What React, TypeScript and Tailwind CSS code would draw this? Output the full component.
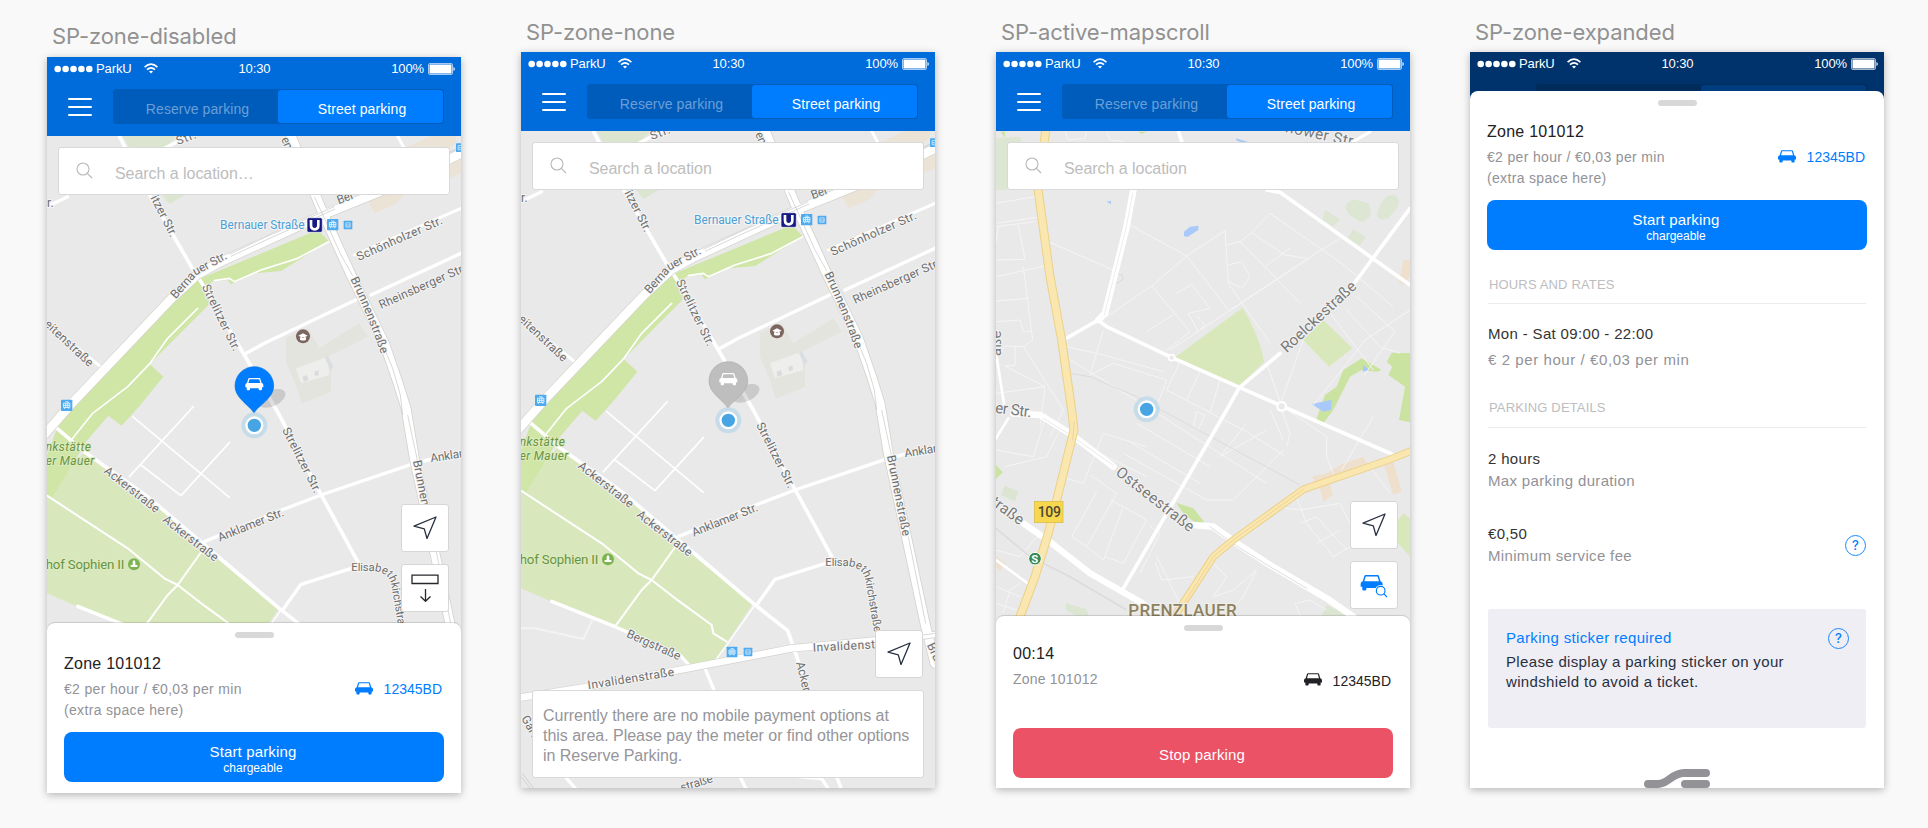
import React from "react";

const ROAD = "#ffffff";

type LabelProps = {
  x: number;
  y: number;
  r?: number;
  len: number;
  size?: number;
  fill?: string;
  halo?: string;
  weight?: number;
  italic?: boolean;
  children: string;
};

/* Map caption anchored at its baseline start and rotated around it. */
function Label({ x, y, r = 0, len, size = 36, fill = "#6e6e6e", halo = "#f4f4f4", weight = 400, italic, children }: LabelProps) {
  return (
    <text
      transform={`translate(${x} ${y}) rotate(${r})`}
      textLength={len}
      fontFamily="Roboto, sans-serif"
      fontSize={size}
      fontWeight={weight}
      fontStyle={italic ? "italic" : "normal"}
      fill={fill}
      stroke={halo}
      strokeWidth={6}
      strokeLinejoin="round"
      paintOrder="stroke"
    >
      {children}
    </text>
  );
}

function CurvedLabel({ id, d, len, size = 36, children }: { id: string; d: string; len: number; size?: number; children: string }) {
  return (
    <>
      <path id={id} d={d} fill="none" />
      <text fontFamily="Roboto, sans-serif" fontSize={size} fill="#6e6e6e" stroke="#f4f4f4" strokeWidth={6} strokeLinejoin="round" paintOrder="stroke">
        <textPath href={`#${id}`} textLength={len}>
          {children}
        </textPath>
      </text>
    </>
  );
}

function Transit({ x, y, s = 32, bus }: { x: number; y: number; s?: number; bus?: boolean }) {
  return (
    <g transform={`translate(${x} ${y}) scale(${s / 32})`}>
      <rect width="32" height="32" rx="2" fill="#4fabf0" />
      {bus ? (
        <path d="M8 8h16v16h-16zM8 16h16M11 21h3M18 21h3" fill="none" stroke="#e6f4ff" strokeWidth="2.5" />
      ) : (
        <path d="M7 10h18v12h-18zM7 16h18M13 10v12M19 10v12M12 6h8v4M10 22v4M22 22v4" fill="none" stroke="#e6f4ff" strokeWidth="2.5" />
      )}
    </g>
  );
}

function Position({ x, y }: { x: number; y: number }) {
  return (
    <g>
      <circle cx={x} cy={y} r="39" fill="#a9d1e8" fillOpacity=".55" />
      <circle cx={x} cy={y} r="27" fill="#fff" />
      <circle cx={x} cy={y} r="20" fill="#48a5e3" />
    </g>
  );
}

const CAR =
  "M9 2.5Q9.6 0 12 0H42Q44.4 0 45 2.5L49 15Q54 16.5 54 21V28H50V34Q50 37 47 37H43Q40 37 40 34V31H14V34Q14 37 11 37H7Q4 37 4 34V28H0V21Q0 16.5 5 15ZM12.5 3.4L9 15H45L41.5 3.4Z";

function BerlinMap({ id, pin, edge }: { id: string; pin: string; edge: string }) {
  return (
    <svg className="absolute inset-0 h-full w-full" viewBox="48 363 1242 1971" preserveAspectRatio="none">
      <rect x="48" y="363" width="1242" height="1971" fill="#e9e9e9" />
      <path d="M275 363H440L400 398H295Z" fill="#dce5d0" />
      <path d="M390 535H470L415 567Z" fill="#dce5d0" />
      <path d="M1120 400L1200 363H1275V385L1240 410ZM1225 450L1290 420V475L1255 490ZM1010 556L1060 535L1120 540L1090 570L1030 595Z" fill="#ece3d7" />
      <path d="M48 1440L160 1310L350 1440L520 1590L742 1782L632 1950L552 1964L528 1935L330 1850L140 1775L48 1735Z" fill="#d9e8bc" />
      <path
        d="M860 645L895 680L860 700L750 768L672 775L600 808L590 795L540 800L532 870L356 1047L397 1085L328 1170L272 1232L232 1202L165 1280L105 1380L65 1445H48V1320L78 1240L120 1180L440 830L510 790Z"
        fill="#cfe6a6"
      />
      <path d="M765 968L830 940L865 1000L985 925L1010 965L870 1035L900 1060V1130L812 1166L795 1110L765 1040Z" fill="#e3e4dd" />
      <path d="M795 1060L890 1025L895 1080L810 1105Z" fill="#eeeeec" />
      <path d="M815 1085L828 1080L832 1095L818 1100ZM850 1070L862 1066L864 1080L852 1084Z" fill="#d9dcde" />
      <path d="M890 1022L908 1055L898 1064L882 1030Z" fill="#dadde2" />

      <g fill="none" stroke={ROAD} strokeLinecap="round" strokeLinejoin="round">
        <path d="M500 880L410 970L357 1045L290 1115L185 1195L125 1270" strokeWidth="5" />
        <path d="M893 680L800 730L690 765L610 800L595 790L550 797" strokeWidth="5" />
        <path d="M305 1205L595 1447M487 1175L295 1385M330 1350L450 1442L595 1283" strokeWidth="5" />
        <path d="M48 1442L290 1600L400 1690L440 1710L520 1772L620 1845L625 1870L665 1895" strokeWidth="6" />
        <path d="M515 1605L440 1710L410 1740L330 1850" strokeWidth="6" />
        <path d="M265 363L350 530L490 770L510 800L640 1020L745 1200L870 1438L980 1640" strokeWidth="11" />
        <path d="M380 410L500 350M48 575L110 545" strokeWidth="10" />
        <path d="M640 1018L700 985L985 850M1020 840L1290 715" strokeWidth="10" />
        <path d="M970 720L1290 580M1100 363L1125 410" strokeWidth="9" />
        <path d="M48 925L215 1060" strokeWidth="9" />
        <path d="M520 1580L760 1482L870 1440L1150 1345L1290 1310" strokeWidth="10" />
        <path d="M978 1655L810 1708L755 1785" strokeWidth="10" />
        <path d="M750 1785L665 1905L632 1950" strokeWidth="4" />
        <path d="M72 1235L160 1310L350 1445L520 1590L742 1778L848 1862L872 1930L915 2060" strokeWidth="11" />
        <path d="M140 1774L330 1850L525 1935L552 1965" strokeWidth="10" />
        <path d="M600 1975L635 2060M180 2300L210 2334M705 2300L722 2334M880 2300L950 2306L968 2334M995 2300L1008 2334" strokeWidth="10" />
        <path d="M48 1855H90L235 1887L262 1830" strokeWidth="6" stroke="#f3f3f3" />
        <g stroke="#d5d3cd">
          <path d="M30 1270L120 1168L420 852L500 778L560 745L880 598L1110 505L1310 405" strokeWidth="30" />
          <path d="M775 350L878 600L965 790L1060 985L1100 1100L1125 1180L1150 1330L1200 1560L1260 1840L1290 1960" strokeWidth="32" />
          <path d="M48 2062L240 2032L550 1975L860 1915L1290 1875" strokeWidth="24" />
        </g>
        <path d="M30 1270L120 1168L420 852L500 778L560 745L880 598L1110 505L1310 405" strokeWidth="26" />
        <path d="M775 350L878 600L965 790L1060 985L1100 1100L1125 1180L1150 1330L1200 1560L1260 1840L1290 1960" strokeWidth="27" />
        <path d="M48 2062L240 2032L550 1975L860 1915L1290 1875" strokeWidth="20" />
        <g stroke="#c4c4c4" strokeWidth="2" strokeLinecap="butt">
          <path d="M595 718L700 668L910 575M600 724L705 675L912 582M1255 412L1290 395" />
          <path d="M850 545L878 605L930 720L965 782M1060 1000L1085 1060L1108 1140L1115 1200M1130 1200L1160 1340M1210 1580L1262 1840M1255 1875L1290 1870M1255 1888L1290 1883" />
          <path d="M48 2300L75 2334M52 2290L85 2334" />
        </g>
      </g>

      <Label x={440} y={390} r={-20} len={62}>Str.</Label>
      <Label x={750} y={372} r={66} len={54}>ens</Label>
      <Label x={48} y={577} len={20}>r.</Label>
      <Label x={358} y={548} r={63} len={135}>itzer Str.</Label>
      <Label x={567} y={642} len={254} fill="#4b9fd6">Bernauer Straße</Label>
      <rect x="828" y="608" width="46" height="44" rx="5" fill="#171a82" stroke="#fff" strokeWidth="2" />
      <path d="M840 615V631Q840 643 851 643T862 631V615" fill="none" stroke="#fff" strokeWidth="8" />
      <Transit x={888} y={612} s={34} />
      <Transit x={938} y={617} s={26} bus />
      <Transit x={1275} y={385} s={26} bus />
      <Label x={923} y={568} r={-21} len={52}>Ber</Label>
      <CurvedLabel id={`${id}-bernauer`} d="M434 853L500 778L605 722" len={202}>Bernauer Str.</CurvedLabel>
      <Label x={983} y={738} r={-24} len={278}>Schönholzer Str.</Label>
      <Label x={1050} y={882} r={-24} len={280}>Rheinsberger Str.</Label>
      <Label x={512} y={815} r={64} len={218}>Strelitzer Str.</Label>
      <CurvedLabel id={`${id}-brunnen`} d="M958 792Q1010 900 1052 1022" len={244}>Brunnenstraße</CurvedLabel>
      <Label x={38} y={930} r={43} len={186}>eitenstraße</Label>
      <circle cx="816" cy="964" r="21" fill="#7d6560" />
      <path d="M802 962L816 955L830 962L816 969ZM807 967V974Q816 979 825 974V967" fill="#fff" />
      <Transit x={90} y={1154} s={34} />

      <Label x={44} y={1307} len={136} fill="#6a9440" halo="#dcebc0" italic>nkstätte</Label>
      <Label x={44} y={1350} len={146} fill="#6a9440" halo="#dcebc0" italic>er Mauer</Label>
      <Label x={217} y={1372} r={38} len={200}>Ackerstraße</Label>
      <Label x={393} y={1518} r={38} len={200}>Ackerstraße</Label>
      <Label x={566} y={1580} r={-22} len={210}>Anklamer Str.</Label>
      <Label x={753} y={1245} r={63} len={215}>Strelitzer Str.</Label>
      <Label x={1200} y={1342} r={-9} len={118}>Anklam</Label>
      <Label x={1146} y={1338} r={79} len={246}>Brunnenstraße</Label>
      <CurvedLabel id={`${id}-elisabeth`} d="M961 1668H1020Q1070 1668 1080 1705L1110 1880" len={300} size={34}>Elisabethkirchstraße</CurvedLabel>
      <Label x={44} y={1661} len={236} size={40} fill="#6a9440" halo="#dcebc0">hof Sophien II</Label>
      <circle cx="309" cy="1648" r="18" fill="#7db350" />
      <path d="M299 1656H319V1650H313V1640Q309 1632 305 1640V1650H299Z" fill="#fff" />
      <Label x={362} y={1880} r={24} len={174}>Bergstraße</Label>
      <Label x={250} y={2038} r={-9} len={262}>Invalidenstraße</Label>
      <Label x={924} y={1925} r={-3} len={264}>Invalidenstraße</Label>
      <Label x={873} y={1958} r={76} len={122}>Ackerst</Label>
      <Label x={1265} y={1905} r={65} len={96}>Brunn</Label>
      <Label x={48} y={2125} r={60} len={108}>Garten</Label>
      <Label x={530} y={2345} r={-17} len={100}>straße</Label>
      <Transit x={665} y={1910} s={32} />
      <Transit x={716} y={1913} s={26} bus />

      <ellipse cx="722" cy="1150" rx="44" ry="24" transform="rotate(-24 722 1150)" fill="#000" fillOpacity=".13" />
      <path d="M669 1194C655 1170 612 1150 612 1113A58 58 0 0 1 728 1113C728 1150 683 1170 669 1194Z" fill={pin} stroke={edge} strokeWidth="2" />
      <path d={CAR} fill="#fff" fillRule="evenodd" transform="translate(643 1089)" />
      <Position x={670} y={1231} />
    </svg>
  );
}

function PrenzlauerMap() {
  return (
    <svg className="absolute inset-0 h-full w-full" viewBox="48 363 1242 1971" preserveAspectRatio="none">
      <rect x="48" y="363" width="1242" height="1971" fill="#e9e9e9" />
      <path d="M48 385L120 380L125 400L80 540H48ZM1035 600L1080 628L1060 650L1028 628ZM1120 657L1157 682L1140 706L1103 684ZM1095 590Q1110 565 1130 570L1165 580L1173 605Q1170 630 1140 635L1105 612ZM1200 585Q1220 550 1245 555Q1265 570 1250 595L1225 625Q1200 635 1190 615Z" fill="#dce6d2" />
      <path d="M75 1427L115 1445L105 1474L62 1455ZM1040 1785L1110 1817H1025ZM258 1780L320 1798L325 1817H290L258 1800Z" fill="#dbe5d1" />
      <path d="M788 893Q835 970 853 1055L778 1128L585 1042ZM1030 930L1117 1015L1047 1070L970 990ZM1270 1510L1290 1525V1640L1254 1600V1530Z" fill="#d8e8bb" />
      <path d="M1145 1045L1205 1080L1190 1085L1145 1080L1110 1100L1085 1150L1060 1200L1030 1240L1008 1230L1035 1155L1070 1130L1090 1080ZM1235 1028L1290 1030V1237L1257 1230L1275 1130L1225 1095L1237 1070L1220 1055ZM588 1478L640 1495L672 1535L655 1545L610 1510ZM48 1365L68 1387L48 1407ZM62 365H75V383ZM475 365H500L485 372Z" fill="#cbe3a0" />
      <path d="M1140 1085L1190 1092L1215 1100L1272 1135L1255 1228L1070 1210L1100 1130Z" fill="#e9e9e9" />
      <path d="M612 665L630 650L655 647V660L622 681L612 678ZM380 575L393 572V583ZM768 385L803 395L798 400L770 392ZM995 1182L1055 1170L1053 1200L1030 1205ZM1150 1065L1168 1080L1148 1085Z" fill="#a9c9fa" />
      <path d="M1270 750H1290V800L1268 825L1257 815ZM1080 1365L1150 1340L1165 1370L1050 1420L1058 1455L1030 1475L1018 1430L995 1400L1040 1390ZM1210 1360L1240 1355L1265 1445L1240 1455ZM48 1640L78 1660L60 1682L48 1670Z" fill="#eee0cd" />

      <g fill="none" stroke="#f5f5f5" strokeWidth="3" strokeLinejoin="round">
        <path d="M48 580L165 560M48 640L170 622M48 650L165 635M48 750L135 748L115 645M48 800L195 768M55 650L48 700M48 873L145 865M130 770L158 990L130 1010L75 1008L48 1040M50 935L120 930L130 965L155 965M105 1010V1065L75 1068M130 1010L250 1200L210 1280M48 1150L195 1130M75 1068L195 1130L180 1250" />
        <path d="M205 695L400 780M450 645L620 738L745 900M735 662L745 820M735 662L620 738L515 828L380 920M515 828L630 965L560 1020M590 850L635 823L690 895L625 910L655 965L675 945L650 915M745 820L870 1000M740 705L780 695L815 668L870 610L1085 760L1240 890M780 695L855 770L930 715M815 668L915 735L985 745M855 770L960 880M745 765L785 755L810 800L785 835L745 815" />
        <path d="M1080 685L1020 722L570 1020M985 745L745 905M578 915L500 965M260 1010L370 1035L550 1085M370 960L330 1095M255 1040L500 1190L860 1420M330 1095L400 1060L560 1110L530 1190M600 1055L560 1140L800 1265L910 1335M660 1085L620 1170M720 1110L690 1210" />
        <path d="M860 1060L905 1190M1000 1185L1090 1075L1155 990L1290 900M970 990L905 1170M1130 860L1245 965L1150 1100M1100 900L1200 1010L1260 1030M1050 910L1180 1080" />
        <path d="M280 1290L500 1400M310 1420L370 1270L500 1310M240 1400L310 1420M330 1395L410 1450L320 1610L275 1580L350 1445M390 1470L430 1490L370 1650L320 1610M430 1490L500 1530L430 1660L375 1640M510 1550L540 1570L480 1690M430 1330L680 1470L760 1470L910 1320M470 1240L690 1370M440 1290L660 1420M800 1240L720 1340L860 1260M640 1250L650 1205L675 1215L655 1260L640 1250" />
        <path d="M48 1320L160 1340L200 1210M75 1370L200 1340L240 1260M48 1620L120 1640L180 1570M48 1730L120 1760M70 1810L90 1740L120 1720M48 1780L110 1800M530 1640L610 1800M525 1655L545 1710L640 1700M700 1660L740 1700L700 1760L760 1740L830 1680L790 1760L740 1817" />
        <path d="M905 1200L930 1270L920 1310M870 1200L910 1290M930 1205L1040 1280V1340L1060 1390M1085 1380L1180 1220M880 1490L960 1500L1080 1480L1120 1560M940 1440L980 1540L1060 1640L1110 1610L1250 1480M960 1540L1010 1520L1100 1620M1010 1600L1080 1560M1170 1370L1230 1450M950 1780L990 1770L1040 1800M945 1780L960 1817" />
        <path d="M255 365L265 390L315 385L320 365M380 365L390 390L435 395" />
      </g>
      <path d="M400 785L425 795L430 808L410 820L395 822" fill="none" stroke="#dadada" strokeWidth="3" />
      <path d="M48 1555L150 1640L270 1700L440 1800" fill="none" stroke="#dcdcdc" strokeWidth="5" />
      <path d="M270 1090L330 1100L470 1160L960 1425" fill="none" stroke="#d9d9d9" strokeWidth="2.5" />

      <g fill="none" stroke={ROAD} strokeLinecap="round" strokeLinejoin="round">
        <path d="M595 363L607 400M860 540L900 547L1290 825M1290 595L1130 810L1090 860M900 1030L778 1133L740 1200L430 1735" strokeWidth="11" />
        <path d="M250 990L355 930L380 950L575 1042L905 1188L1235 1332" strokeWidth="11" />
        <path d="M460 540L440 650L375 910L355 930" strokeWidth="20" />
        <path d="M458 550L438 655L373 915" strokeWidth="2" stroke="#e3e3e3" />
        <path d="M48 1030L75 1200M48 1285L85 1225M48 1650L150 1725" strokeWidth="8" />
        <path d="M100 1210L180 1215L270 1270L400 1370" strokeWidth="20" />
        <path d="M190 1225L275 1278L400 1366" strokeWidth="2" stroke="#dedede" />
        <path d="M640 1545L700 1550L770 1600L870 1665L1040 1765L1120 1820" strokeWidth="20" />
        <path d="M690 1550L770 1608L870 1670L980 1735" strokeWidth="3" stroke="#dedede" />
        <path d="M130 1540L200 1588L330 1690L480 1775L530 1810" strokeWidth="19" />
        <path d="M1120 395L1170 365" strokeWidth="9" />
        <circle cx="575" cy="1043" r="9" strokeWidth="5" fill="#e9e9e9" />
        <circle cx="905" cy="1189" r="13" strokeWidth="7" fill="#e9e9e9" />
        <g stroke="#ecd08a">
          <path d="M197 360L175 545L210 800L245 990L275 1200L282 1260L240 1430L205 1570L165 1700L118 1825" strokeWidth="27" />
          <path d="M1300 1320L1225 1350L970 1438L760 1590L700 1640L590 1810" strokeWidth="23" />
        </g>
        <g stroke="#fae7b0">
          <path d="M197 360L175 545L210 800L245 990L275 1200L282 1260L240 1430L205 1570L165 1700L118 1825" strokeWidth="21" />
          <path d="M1300 1320L1225 1350L970 1438L760 1590L700 1640L590 1810" strokeWidth="17" />
        </g>
        <path d="M283 1235L278 1290M970 1438L760 1590L700 1640L600 1800" stroke="#e6cb86" strokeWidth="2" />
      </g>

      <Label x={914} y={366} r={12} len={218} size={46} fill="#7a7a7a">hower Str.</Label>
      <Label x={920} y={1030} r={-43} len={290} size={46} fill="#7a7a7a">Roelckestraße</Label>
      <Label x={44} y={1208} r={7} len={110} size={46} fill="#7a7a7a">er Str.</Label>
      <Label x={404} y={1392} r={38} len={285} size={46} fill="#7a7a7a">Ostseestraße</Label>
      <Label x={30} y={1482} r={36} len={110} size={46} fill="#7a7a7a">traße</Label>
      <Label x={64} y={1038} r={-90} len={76} size={44} fill="#7a7a7a">aße</Label>
      <rect x="163" y="1474" width="86" height="64" fill="#f6d74f" stroke="#d6b84a" strokeWidth="2" />
      <text x="173" y="1521" fontFamily="Roboto, sans-serif" fontWeight="500" fontSize="42" textLength="70" fill="#4e4933">109</text>
      <circle cx="165" cy="1646" r="19" fill="#388a52" stroke="#fff" strokeWidth="3" />
      <text x="154" y="1658" fontFamily="Roboto, sans-serif" fontWeight="700" fontSize="34" fill="#fff">S</text>
      <Label x={445} y={1817} len={325} size={51} weight={500} fill="#8d8164" halo="#f2efe6">PRENZLAUER</Label>
      <Position x={500} y={1198} />
    </svg>
  );
}

function CarIcon({ className }: { className: string }) {
  return (
    <svg className={className} width="18" height="13" viewBox="0 0 54 38">
      <path d={CAR} fill="currentColor" fillRule="evenodd" />
    </svg>
  );
}

function StatusBar() {
  return (
    <div className="grid h-6 grid-cols-3 items-center pr-[6px] pl-[7px] text-[13px] leading-6 tracking-[-0.1px] text-white">
      <div className="flex items-center">
        <svg width="39" height="8" viewBox="0 0 39 8" fill="#fff">
          <circle cx="3.7" cy="4" r="3.3" />
          <circle cx="11.6" cy="4" r="3.3" />
          <circle cx="19.5" cy="4" r="3.3" />
          <circle cx="27.4" cy="4" r="3.3" />
          <circle cx="35.3" cy="4" r="3.3" />
        </svg>
        <span className="ml-[3px]">ParkU</span>
        <svg className="mb-0.5 ml-3" width="14" height="11" viewBox="0 0 14 11" fill="none" stroke="#fff" strokeWidth="1.7">
          <path d="M.6 4.1Q7-1.9 13.4 4.1M3 6.6Q7 3 11 6.6" />
          <path d="M5 8.6Q7 6.8 9 8.6L7 10.6Z" fill="#fff" stroke="none" />
        </svg>
      </div>
      <span className="text-center">10:30</span>
      <div className="flex items-center justify-end gap-1">
        <span>100%</span>
        <svg width="27" height="12" viewBox="0 0 27 12">
          <rect x=".5" y=".5" width="24" height="11" rx="1.5" fill="none" stroke="#fff" strokeOpacity=".65" />
          <rect x="1.5" y="1.5" width="22" height="9" rx=".5" fill="#fff" />
          <path d="M25.4 4Q27 4.5 27 6T25.4 8Z" fill="#fff" fillOpacity=".8" />
        </svg>
      </div>
    </div>
  );
}

function Header() {
  return (
    <header className="h-[79px] shrink-0 bg-[#006bdb]">
      <StatusBar />
      <div className="flex items-center pt-2 pl-[21px]">
        <svg width="24" height="18" viewBox="0 0 24 18" stroke="#fff" strokeWidth="2" strokeLinecap="round">
          <path d="M1 1H23M1 9H23M1 17H23" />
        </svg>
        <div className="ml-[21px] flex h-[35px] w-[331px] rounded-[3px] bg-[#005cba] p-px text-center text-[14px] leading-[38px] tracking-[0.1px]">
          <span className="w-[164px] pl-[3px] text-[#6a9fd8]">Reserve parking</span>
          <span className="flex-1 rounded-[3px] bg-[#007dff] pl-[3px] text-white">Street parking</span>
        </div>
      </div>
    </header>
  );
}

function SearchBox({ text }: { text: string }) {
  return (
    <div className="mx-[11px] mt-[11px] flex h-12 items-center rounded-[3px] border border-[#d9d9d9] bg-white pl-[17px]">
      <svg className="mb-0.5" width="17" height="17" viewBox="0 0 17 17" fill="none" stroke="#b8b8b8" strokeWidth="1.1">
        <circle cx="7" cy="7" r="6" />
        <path d="M11.3 11.3L16 16" />
      </svg>
      <span className="ml-[22px] pt-[5px] text-[16px] tracking-[-0.05px] text-[#bdbdbd]">{text}</span>
    </div>
  );
}

function MapButton({ children }: { children: React.ReactNode }) {
  return (
    <div className="mr-3 flex h-12 w-12 shrink-0 items-center justify-center self-end rounded-[3px] border border-[#d6d6d6] bg-white">{children}</div>
  );
}

function Arrow() {
  return (
    <svg width="26" height="26" viewBox="0 0 26 26" fill="none" stroke="#27303f" strokeWidth="1.3" strokeLinejoin="round">
      <path d="M24 2L15 23.5L12.3 13.8L2 11.2Z" />
    </svg>
  );
}

function Handle() {
  return <div className="mx-auto mt-[9px] h-[6px] w-[39px] shrink-0 rounded-full bg-[#d8d8d8]" />;
}

function ZoneSummary() {
  return (
    <>
      <Handle />
      <div className="px-[17px]">
        <h2 className="mt-[14px] text-[16px] leading-6 tracking-[0.25px] text-[#222]">Zone 101012</h2>
        <div className="mt-[3px] flex justify-between text-[14px]">
          <p className="leading-[21px] tracking-[0.33px] text-[#929297]">
            €2 per hour / €0,03 per min
            <br />
            (extra space here)
          </p>
          <span className="flex h-[25px] items-center pr-0.5 text-[#007dff]">
            <CarIcon className="mr-[11px] mb-1.5" />
            <span className="pb-1">12345BD</span>
          </span>
        </div>
        <div className="mt-[11px] flex h-[50px] flex-col items-center rounded-lg bg-[#007dff] pt-[11px] pr-0.5 text-white">
          <span className="text-[15px] leading-[18px] tracking-[0.15px]">Start parking</span>
          <span className="text-[12px] leading-[14px]">chargeable</span>
        </div>
      </div>
    </>
  );
}

function Screen({ title, lower, className, children }: { title: string; lower?: boolean; className?: string; children: React.ReactNode }) {
  return (
    <section className={`${lower ? "pt-[20px]" : "pt-4"} ${className ?? ""} w-[414px] shrink-0`}>
      <h1 className={`${lower ? "h-[37px]" : "h-9"} pt-[2px] pl-[5px] text-[22px] leading-[28px] tracking-[-0.1px] whitespace-nowrap text-[#919191] [font-family:Inter,sans-serif]`}>{title}</h1>
      <div className="flex h-[736px] flex-col overflow-hidden bg-white shadow-[0_2px_8px_rgba(0,0,0,0.28)]">{children}</div>
    </section>
  );
}

function HelpIcon() {
  return (
    <span className="flex h-[21px] w-[21px] shrink-0 items-center justify-center rounded-full border border-[#1a88ff] text-[13px] leading-none font-medium tracking-normal text-[#007dff] [font-family:Inter,sans-serif]">
      ?
    </span>
  );
}

export default function App() {
  return (
    <main className="flex h-[828px] w-[1928px] overflow-hidden bg-[#f9f9f9] pl-[47px] [font-family:'Liberation_Sans',Arial,sans-serif]">
      <Screen title="SP-zone-disabled" lower>
        <Header />
        <div className="relative flex-1">
          <BerlinMap id="a" pin="#007dff" edge="#0a74e0" />
          <div className="relative flex h-full flex-col">
            <SearchBox text="Search a location…" />
            <div className="flex-1" />
            <MapButton>
              <Arrow />
            </MapButton>
            <div className="h-3 shrink-0" />
            <MapButton>
              <svg width="28" height="28" viewBox="0 0 28 28" fill="none" stroke="#27272c" strokeWidth="1.3">
                <path d="M1 1.2H27V9.5H1ZM14.5 15V27M9.5 22.5L14.5 27.3L19.5 22.5" />
              </svg>
            </MapButton>
            <div className="mt-[11px] h-[170px] shrink-0 rounded-t-lg bg-white shadow-[0_-1px_1px_rgba(0,0,0,0.14)]">
              <ZoneSummary />
            </div>
          </div>
        </div>
      </Screen>

      <Screen title="SP-zone-none" className="ml-[60px]">
        <Header />
        <div className="relative flex-1">
          <BerlinMap id="b" pin="#bebebe" edge="#a9a9a9" />
          <div className="relative flex h-full flex-col">
            <SearchBox text="Search a location" />
            <div className="flex-1" />
            <MapButton>
              <Arrow />
            </MapButton>
            <p className="mx-[11px] mt-3 mb-[10px] h-[88px] shrink-0 rounded-[3px] border border-[#d9d9d9] bg-white pt-[15px] pl-[10px] text-[16px] leading-5 tracking-[-0.02px] whitespace-nowrap text-[#95959a]">
              Currently there are no mobile payment options at
              <br />
              this area. Please pay the meter or find other options
              <br />
              in Reserve Parking.
            </p>
          </div>
        </div>
      </Screen>

      <Screen title="SP-active-mapscroll" className="ml-[61px]">
        <Header />
        <div className="relative flex-1">
          <PrenzlauerMap />
          <div className="relative flex h-full flex-col">
            <SearchBox text="Search a location" />
            <div className="flex-1" />
            <MapButton>
              <Arrow />
            </MapButton>
            <div className="h-3 shrink-0" />
            <MapButton>
              <svg className="mt-0.5" width="28" height="24" viewBox="0 0 84 72">
                <path d={CAR} fill="#007dff" fillRule="evenodd" transform="translate(2 3) scale(1.22 1.25)" />
                <circle cx="62" cy="50" r="17" fill="#fff" />
                <path d="M71 59L81 69" stroke="#007dff" strokeWidth="3.5" />
                <circle cx="62" cy="50" r="13" fill="#fff" stroke="#007dff" strokeWidth="3.5" />
              </svg>
            </MapButton>
            <div className="mt-[7px] h-[172px] shrink-0 rounded-t-lg bg-white shadow-[0_-1px_1px_rgba(0,0,0,0.14)]">
              <Handle />
              <div className="px-[17px]">
                <h2 className="mt-[11px] text-[16px] leading-6 tracking-[0.25px] text-[#222]">00:14</h2>
                <div className="mt-[3px] flex items-start justify-between text-[14px] leading-5">
                  <span className="tracking-[0.2px] text-[#929297]">Zone 101012</span>
                  <span className="flex items-center pt-0.5 pr-0.5 text-[#222226]">
                    <CarIcon className="mr-[11px] mb-1" />
                    12345BD
                  </span>
                </div>
                <div className="mt-[37px] h-[50px] rounded-lg bg-[#eb5266] pr-0.5 text-center text-[15px] leading-[54px] tracking-[0.15px] text-white">Stop parking</div>
              </div>
            </div>
          </div>
        </div>
      </Screen>

      <Screen title="SP-zone-expanded" className="ml-[60px]">
        <header className="h-12 shrink-0 bg-[#00336c]">
          <StatusBar />
          <div className="mt-2 ml-[66px] flex h-4 w-[331px] rounded-t-[3px] bg-[#002c5c] p-px pb-0">
            <div className="w-[164px]" />
            <div className="flex-1 rounded-t-[3px] bg-[#003d80]" />
          </div>
        </header>
        <div className="relative -mt-[9px] flex-1 rounded-t-lg bg-white">
          <ZoneSummary />
          <div className="px-[18px] text-[15px] leading-[22px] tracking-[0.34px] text-[#333]">
            <h3 className="mt-[25px] border-b border-[#ececec] pb-2 pl-px text-[13px] leading-5 tracking-[0.15px] text-[#bdbdc0]">HOURS AND RATES</h3>
            <p className="mt-[19px]">Mon - Sat 09:00 - 22:00</p>
            <p className="mt-1 tracking-[0.58px] text-[#929297]">€ 2 per hour / €0,03 per min</p>
            <h3 className="mt-[27px] border-b border-[#ececec] pb-[9px] pl-px text-[13px] leading-5 tracking-[0.15px] text-[#bdbdc0]">PARKING DETAILS</h3>
            <p className="mt-5">2 hours</p>
            <p className="text-[#929297]">Max parking duration</p>
            <div className="mt-[31px] flex items-center justify-between">
              <div>
                <p>€0,50</p>
                <p className="text-[#929297]">Minimum service fee</p>
              </div>
              <HelpIcon />
            </div>
            <div className="mt-[42px] h-[119px] rounded-[3px] bg-[#efeef4] pt-[18px] pr-[17px] pl-[18px]">
              <div className="flex items-center justify-between">
                <span className="text-[#007dff]">Parking sticker required</span>
                <HelpIcon />
              </div>
              <p className="mt-[3px] leading-5 text-[#27303f]">
                Please display a parking sticker on your
                <br />
                windshield to avoid a ticket.
              </p>
            </div>
          </div>
          <svg className="mx-auto mt-[41px]" width="66" height="20" viewBox="0 0 66 20" fill="none" stroke="#929297" strokeWidth="8" strokeLinecap="round">
            <path d="M4 15H14C24 15 28 4 40 4H62M41 15H62" />
          </svg>
        </div>
      </Screen>
    </main>
  );
}
